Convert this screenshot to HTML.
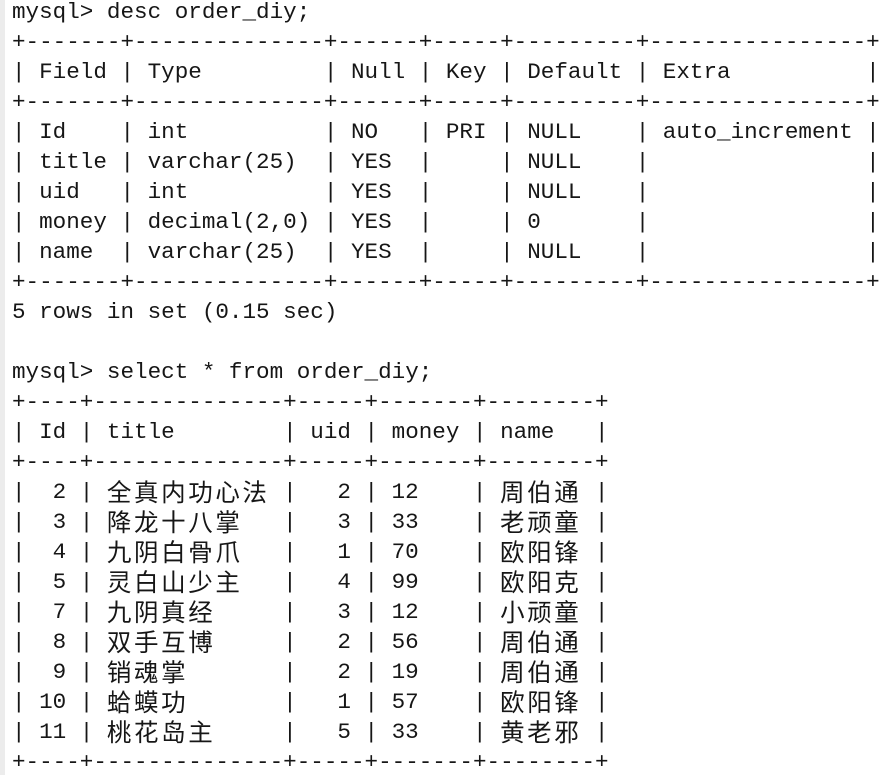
<!DOCTYPE html>
<html><head><meta charset="utf-8"><style>
html,body{margin:0;padding:0;background:#fff;width:894px;height:775px;overflow:hidden}
.bar{position:absolute;left:0;top:0;width:5px;height:775px;background:#ececec}
.t{position:absolute;left:12px;top:-3px;font-family:"Liberation Mono","Noto Sans CJK SC",monospace;font-size:22.6px;color:#161616}
.t div{height:30px;line-height:30px;white-space:pre;overflow:visible}
.c{font-size:24.5px;letter-spacing:2.6px;font-family:"Noto Sans CJK SC","WenQuanYi Zen Hei",sans-serif;line-height:30px;vertical-align:top}
</style></head><body><div class="bar"></div>
<div class="t">
<div>mysql&gt; desc order_diy;</div>
<div>+-------+--------------+------+-----+---------+----------------+</div>
<div>| Field | Type         | Null | Key | Default | Extra          |</div>
<div>+-------+--------------+------+-----+---------+----------------+</div>
<div>| Id    | int          | NO   | PRI | NULL    | auto_increment |</div>
<div>| title | varchar(25)  | YES  |     | NULL    |                |</div>
<div>| uid   | int          | YES  |     | NULL    |                |</div>
<div>| money | decimal(2,0) | YES  |     | 0       |                |</div>
<div>| name  | varchar(25)  | YES  |     | NULL    |                |</div>
<div>+-------+--------------+------+-----+---------+----------------+</div>
<div>5 rows in set (0.15 sec)</div>
<div> </div>
<div>mysql&gt; select * from order_diy;</div>
<div>+----+--------------+-----+-------+--------+</div>
<div>| Id | title        | uid | money | name   |</div>
<div>+----+--------------+-----+-------+--------+</div>
<div>|  2 | <span class="c">全真内功心法</span> |   2 | 12    | <span class="c">周伯通</span> |</div>
<div>|  3 | <span class="c">降龙十八掌</span>   |   3 | 33    | <span class="c">老顽童</span> |</div>
<div>|  4 | <span class="c">九阴白骨爪</span>   |   1 | 70    | <span class="c">欧阳锋</span> |</div>
<div>|  5 | <span class="c">灵白山少主</span>   |   4 | 99    | <span class="c">欧阳克</span> |</div>
<div>|  7 | <span class="c">九阴真经</span>     |   3 | 12    | <span class="c">小顽童</span> |</div>
<div>|  8 | <span class="c">双手互博</span>     |   2 | 56    | <span class="c">周伯通</span> |</div>
<div>|  9 | <span class="c">销魂掌</span>       |   2 | 19    | <span class="c">周伯通</span> |</div>
<div>| 10 | <span class="c">蛤蟆功</span>       |   1 | 57    | <span class="c">欧阳锋</span> |</div>
<div>| 11 | <span class="c">桃花岛主</span>     |   5 | 33    | <span class="c">黄老邪</span> |</div>
<div>+----+--------------+-----+-------+--------+</div>
</div>
</body></html>
